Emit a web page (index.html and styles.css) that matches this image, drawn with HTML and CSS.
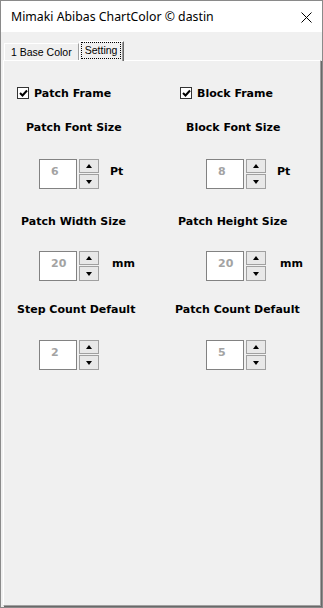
FILE: index.html
```html
<!DOCTYPE html>
<html lang="en">
<head>
<meta charset="UTF-8" />
<meta name="viewport" content="width=device-width, initial-scale=1" />
<title>Mimaki Abibas ChartColor</title>
<link rel="stylesheet" href="styles.css">
</head>
<body>

<div class="window">
  <div class="titlebar">
    <span class="title">Mimaki Abibas ChartColor © dastin</span>
    <svg class="close" width="11" height="11" viewBox="0 0 11 11">
      <path d="M0.5 0.5 L10.5 10.5 M10.5 0.5 L0.5 10.5" stroke="#000" stroke-width="1" fill="none"/>
    </svg>
  </div>

  <div class="tabs">
    <div class="tab">1 Base Color</div>
    <div class="tab selected"><span class="focus">Setting</span></div>
  </div>

  <div class="panel">
    <div class="row checks">
      <label class="cell check ck-left">
        <span class="box"><svg width="9" height="9" viewBox="0 0 9 9"><path d="M1 4 L3.5 6.5 L8 1.5" stroke="#000" stroke-width="2" fill="none"/></svg></span>
        Patch Frame
      </label>
      <label class="cell check ck-right">
        <span class="box"><svg width="9" height="9" viewBox="0 0 9 9"><path d="M1 4 L3.5 6.5 L8 1.5" stroke="#000" stroke-width="2" fill="none"/></svg></span>
        Block Frame
      </label>
    </div>

    <div class="row labels lr1">
      <div class="cell lbl-a">Patch Font Size</div>
      <div class="cell lbl-b">Block Font Size</div>
    </div>
    <div class="row spins sr1">
      <div class="cell spin-left">
        <div class="spin"><div class="field">6</div><div class="btns"><div class="btn up"></div><div class="btn down"></div></div></div>
        <span class="unit">Pt</span>
      </div>
      <div class="cell spin-right">
        <div class="spin"><div class="field">8</div><div class="btns"><div class="btn up"></div><div class="btn down"></div></div></div>
        <span class="unit">Pt</span>
      </div>
    </div>

    <div class="row labels lr2">
      <div class="cell lbl-c">Patch Width Size</div>
      <div class="cell lbl-d">Patch Height Size</div>
    </div>
    <div class="row spins sr2">
      <div class="cell spin-left">
        <div class="spin"><div class="field">20</div><div class="btns"><div class="btn up"></div><div class="btn down"></div></div></div>
        <span class="unit mm-left">mm</span>
      </div>
      <div class="cell spin-right">
        <div class="spin"><div class="field">20</div><div class="btns"><div class="btn up"></div><div class="btn down"></div></div></div>
        <span class="unit mm-right">mm</span>
      </div>
    </div>

    <div class="row labels lr3">
      <div class="cell lbl-e">Step Count Default</div>
      <div class="cell lbl-f">Patch Count Default</div>
    </div>
    <div class="row spins sr3">
      <div class="cell spin-left">
        <div class="spin"><div class="field">2</div><div class="btns"><div class="btn up"></div><div class="btn down"></div></div></div>
      </div>
      <div class="cell spin-right">
        <div class="spin"><div class="field">5</div><div class="btns"><div class="btn up"></div><div class="btn down"></div></div></div>
      </div>
    </div>
  </div>
</div>

</body>
</html>
```

FILE: styles.css
```css
body {
  margin: 0;
  background: #f0f0f0;
}
.window {
  width: 323px;
  height: 608px;
  box-sizing: border-box;
  border: 1px solid #8a8a8a;
  background: #f0f0f0;
  display: flex;
  flex-direction: column;
}
.titlebar {
  height: 31px;
  background: #fff;
  display: flex;
  align-items: center;
  justify-content: space-between;
  padding: 0 10px 0 10px;
  flex: none;
}
.title {
  font-family: "Noto Sans", sans-serif;
  font-size: 12.3px;
  color: #000;
}
.close {
  margin-top: 1px;
}
.tabs {
  height: 28px;
  flex: none;
  display: flex;
  align-items: flex-end;
  padding-left: 3px;
  font-family: "Liberation Sans", sans-serif;
  font-size: 10.5px;
}
.tab {
  height: 16px;
  padding: 0 6px;
  line-height: 16px;
  border: 1px solid #fff;
  border-bottom: none;
  border-right: 1px solid #a0a0a0;
  position: relative;
  z-index: 1;
}
.tab.selected {
  height: 19px;
  padding: 0 2px 0 1px;
  line-height: 17px;
  margin-bottom: -1px;
  background: #f0f0f0;
  border-right: 1px solid #696969;
  box-shadow: inset -1px 0 #a0a0a0;
}
.focus {
  display: inline-block;
  border: 1px dotted #000;
  padding: 0 3px;
  line-height: 15px;
}
.panel {
  flex: 1;
  margin: 0 1px 1px 2px;
  border-top: 1px solid #fff;
  border-left: 1px solid #fff;
  border-right: 1px solid #a0a0a0;
  border-bottom: 1px solid #a0a0a0;
  box-shadow: 1px 1px 0 #696969;
  padding-top: 26px;
  font-family: "DejaVu Sans", sans-serif;
  font-weight: bold;
  font-size: 11px;
  color: #000;
}
.row {
  display: flex;
}
.cell {
  width: 158px;
  box-sizing: border-box;
}
.check {
  display: flex;
  align-items: center;
  height: 12px;
  gap: 5px;
}
.ck-left { padding-left: 13px; }
.ck-right { padding-left: 18px; }
.box {
  width: 10px;
  height: 10px;
  border: 1px solid #333;
  background: #fff;
  display: flex;
  align-items: center;
  justify-content: center;
}
.labels {
  line-height: 13px;
}
.lr1 { margin-top: 22px; }
.lr2 { margin-top: 26px; }
.lr3 { margin-top: 22px; }
.lbl-a { padding-left: 22px; }
.lbl-b { padding-left: 24px; }
.lbl-c { padding-left: 17px; }
.lbl-d { padding-left: 16px; }
.lbl-e { padding-left: 13px; }
.lbl-f { padding-left: 13px; }
.sr1 { margin-top: 25px; }
.sr2 { margin-top: 23px; }
.sr3 { margin-top: 24px; }
.spins .cell {
  display: flex;
  align-items: flex-start;
}
.spin-left { padding-left: 35px; }
.spin-right { padding-left: 44px; }
.spin {
  display: flex;
  gap: 2px;
  height: 30px;
}
.field {
  border: 1px solid #828282;
  background: #fff;
  color: #a3a3a3;
  padding-left: 11px;
  box-sizing: border-box;
  width: 38px;
  height: 30px;
  line-height: 12px;
  padding-top: 6px;
}
.btns {
  display: flex;
  flex-direction: column;
  gap: 1px;
}
.btn {
  width: 20px;
  height: 14px;
  box-sizing: border-box;
  border: 1px solid #a0a0a0;
  background: #e8e8e8;
  display: flex;
  align-items: center;
  justify-content: center;
}
.btn.down { height: 15px; }
.btn::after {
  content: "";
  width: 0;
  height: 0;
  border-left: 3.5px solid transparent;
  border-right: 3.5px solid transparent;
}
.btn.up::after { border-bottom: 4px solid #000; }
.btn.down::after { border-top: 4px solid #000; }
.unit {
  margin-left: 11px;
  margin-top: 7px;
  line-height: 12px;
}
.mm-left { margin-left: 13px; margin-top: 7px; }
.mm-right { margin-left: 14px; margin-top: 7px; }
```
